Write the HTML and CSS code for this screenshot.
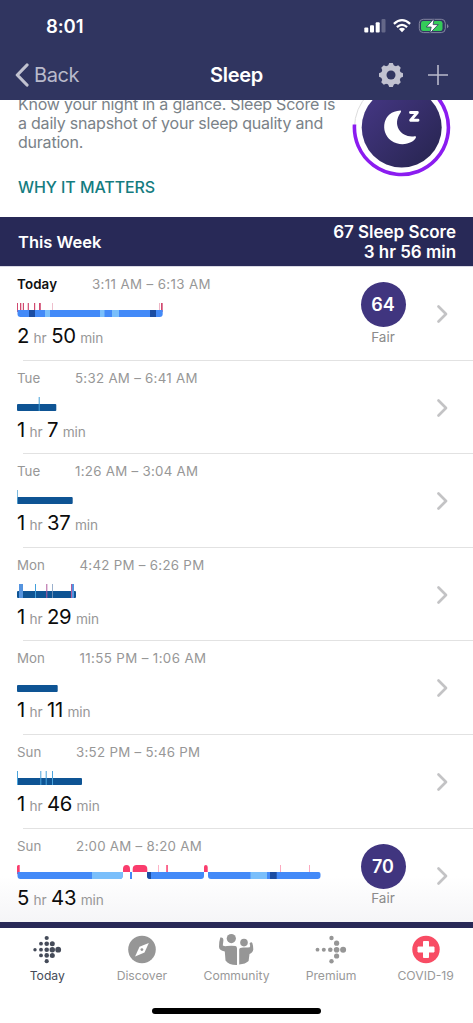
FILE: index.html
```html
<!DOCTYPE html>
<html lang="en">
<head>
<meta charset="utf-8">
<title>Sleep</title>
<link rel="stylesheet" href="styles.css">
</head>
<body>
<div class="app">
  <header class="header">
    <div class="status">
      <span class="clock">8:01</span>
      <svg class="status-icons" width="90" height="20" viewBox="360 16 90 20">
        <g fill="#fff">
          <rect x="364.300" y="27.500" width="4" height="5" rx="1"/>
          <rect x="370" y="25.300" width="4" height="7.200" rx="1"/>
          <rect x="375.700" y="22.300" width="4" height="10.200" rx="1"/>
          <rect x="381.500" y="19" width="4" height="13.500" rx="1" opacity=".25"/>
        </g>
        <g fill="none" stroke="#fff" stroke-width="2.300">
          <path d="M393.900 23.900Q402 16.300 410.100 23.900"/>
          <path d="M396.900 27.100Q402 22.700 407.100 27.100"/>
        </g>
        <path d="M398.900 29Q402 26.700 405.100 29L402 32.300Z" fill="#fff"/>
        <rect x="419.300" y="19.300" width="26" height="13.300" rx="4" fill="none" stroke="#8486a0"/>
        <path d="M447 24v4.300q1.400-.6 1.400-2.100T447 24Z" fill="#8486a0"/>
        <rect x="421" y="21" width="21.500" height="10" rx="2.300" fill="#34cb59"/>
        <path d="M434.300 18.300L426.300 27h4.900l-1.400 6.400 8.400-8.800h-5.100Z" fill="#fff" stroke="#303560" stroke-width=".8"/>
      </svg>
    </div>
    <div class="navbar">
      <div class="back">
        <svg width="14" height="24" viewBox="0 0 14 24"><path d="M12 2L2.300 12 12 22" fill="none" stroke="#c1c2d0" stroke-width="3.200" stroke-linecap="round" stroke-linejoin="round"/></svg>
        <span>Back</span>
      </div>
      <h1 class="title">Sleep</h1>
      <div class="actions">
        <svg width="26" height="26" viewBox="-13 -13 26 26">
          <g fill="#c1c2d0">
            <g id="teeth"><path id="tooth" d="M-3.400-8L-1.800-12H1.800L3.400-8V8L1.800 12H-1.800L-3.400 8Z"/><use href="#tooth" transform="rotate(90)"/></g>
            <use href="#teeth" transform="rotate(45)"/>
            <circle r="10"/>
          </g>
          <circle r="4.500" fill="#303560"/>
        </svg>
        <svg width="20" height="20" viewBox="0 0 20 20"><path d="M0 10H20M10 0V20" stroke="#b9bacb" stroke-width="1.600"/></svg>
      </div>
    </div>
  </header>

  <section class="intro">
    <div class="intro-copy">
      <p>Know your night in a glance. Sleep Score is<br>a daily snapshot of your sleep quality and<br>duration.</p>
      <a class="why">WHY IT MATTERS</a>
    </div>
    <svg class="score-ring" width="100" height="80" viewBox="352 100 100 80">
      <defs><linearGradient id="night" x1="0" y1="0" x2="1" y2="1"><stop offset=".15" stop-color="#42357f"/><stop offset=".9" stop-color="#292653"/></linearGradient></defs>
      <circle cx="401.500" cy="127.500" r="47" fill="none" stroke="#ddd" stroke-width="1"/>
      <path d="M354.500 124.500A47 47 0 1 0 434.700 94.300" fill="none" stroke="#8b1cf0" stroke-width="3.600"/>
      <circle cx="401.700" cy="127.500" r="40" fill="url(#night)"/>
      <path d="M400.300 110.600C382.500 111.500 379.600 132 391 140.500C401.500 148 414.500 142.500 416 137.300C416.200 136.300 415.300 136 413.500 136.400C401.500 137.500 391.500 125.500 400.500 112.800C401.300 111.500 401.300 110.500 400.300 110.600Z" fill="#fff"/>
      <path d="M410.500 112.500H417.300L410.700 120.300H418" fill="none" stroke="#fff" stroke-width="2.900" stroke-linejoin="round" stroke-linecap="round"/>
    </svg>
  </section>

  <section class="week">
    <h2>This Week</h2>
    <div class="week-total">67 Sleep Score<br>3 hr 56 min</div>
  </section>

  <main class="list">
    <article class="row">
      <div class="log">
        <div class="when"><b class="day today">Today</b><span class="range wider">3:11 AM – 6:13 AM</span></div>
        <svg class="chart" width="310" height="15" viewBox="17 -8 310 15">
          <g fill="#d14970"><path d="M17-7h1v9h-1z"/><path d="M20-7h1.300v7H20zM22.800-7h1.200v7h-1.200zM27.700-7h1.200v7h-1.200zM34-7h1.200v7H34zM39-7h1.800v7H39zM161-7h1.700v9H161z"/><path d="M52-7h.7v7H52zM159-7h.8v7h-.8z" opacity=".5"/></g>
          <path d="M17.500 0H162.700V4a3 3 0 0 1-3 3H20.500a3 3 0 0 1-3-3Z" fill="#438af8"/>
          <path d="M29 0h6v7h-6zM150 0h6v7h-6z" fill="#1b4da2"/><path d="M45 0h5v7h-5zM100 0h4.500v7H100zM112 0h7v7h-7z" fill="#7abffb"/>
        </svg>
        <div class="duration">2 <small>hr</small> 50 <small>min</small></div>
      </div>
      <div class="score"><span class="badge">64</span><span class="rating">Fair</span></div>
      <svg class="chevron" width="14" height="20" viewBox="0 0 14 20"><path d="M3.500 2.500L11 10 3.500 17.500" /></svg>
    </article>

    <article class="row">
      <div class="log">
        <div class="when"><span class="day tue">Tue</span><span class="range">5:32 AM – 6:41 AM</span></div>
        <svg class="chart" width="310" height="15" viewBox="17 -8 310 15"><rect x="17" width="39.300" height="7" rx="1" fill="#0e5494"/><path d="M38.700-7h1V7h-1z" fill="#439fd8"/></svg>
        <div class="duration">1 <small>hr</small> 7 <small>min</small></div>
      </div>
      <svg class="chevron" width="14" height="20" viewBox="0 0 14 20"><path d="M3.500 2.500L11 10 3.500 17.500" /></svg>
    </article>

    <article class="row">
      <div class="log">
        <div class="when"><span class="day tue">Tue</span><span class="range">1:26 AM – 3:04 AM</span></div>
        <svg class="chart" width="310" height="15" viewBox="17 -8 310 15"><rect x="17" width="55.700" height="7" rx="1" fill="#0e5494"/><path d="M17-7h.8V7H17z" fill="#5ba9d7"/></svg>
        <div class="duration">1 <small>hr</small> 37 <small>min</small></div>
      </div>
      <svg class="chevron" width="14" height="20" viewBox="0 0 14 20"><path d="M3.500 2.500L11 10 3.500 17.500" /></svg>
    </article>

    <article class="row">
      <div class="log">
        <div class="when"><span class="day mon">Mon</span><span class="range">4:42 PM – 6:26 PM</span></div>
        <svg class="chart" width="310" height="15" viewBox="17 -8 310 15"><rect x="17" width="59" height="7" rx="1" fill="#0e5494"/><path d="M19-7h4V7h-4zM72-7h2V7h-2z" fill="#5594df"/><path d="M35-7h1V7h-1z" fill="#42a0dc"/><path d="M46.300-7h1V7h-1zM71-7h1V7h-1z" fill="#b05a9e"/><path d="M52-7h.8V7H52z" fill="#829dc0"/></svg>
        <div class="duration">1 <small>hr</small> 29 <small>min</small></div>
      </div>
      <svg class="chevron" width="14" height="20" viewBox="0 0 14 20"><path d="M3.500 2.500L11 10 3.500 17.500" /></svg>
    </article>

    <article class="row">
      <div class="log">
        <div class="when"><span class="day mon">Mon</span><span class="range wider">11:55 PM – 1:06 AM</span></div>
        <svg class="chart" width="310" height="15" viewBox="17 -8 310 15"><rect x="17" width="40.700" height="7" rx="1" fill="#0e5494"/></svg>
        <div class="duration">1 <small>hr</small> 11 <small>min</small></div>
      </div>
      <svg class="chevron" width="14" height="20" viewBox="0 0 14 20"><path d="M3.500 2.500L11 10 3.500 17.500" /></svg>
    </article>

    <article class="row">
      <div class="log">
        <div class="when"><span class="day sun">Sun</span><span class="range">3:52 PM – 5:46 PM</span></div>
        <svg class="chart" width="310" height="15" viewBox="17 -8 310 15"><rect x="17" width="65" height="7" rx="1" fill="#0e5494"/><path d="M17-7h1V7h-1zM40.300-7h1V7h-1zM45.700-7h1V7h-1zM52-7h1V7h-1z" fill="#4ba4dc"/></svg>
        <div class="duration">1 <small>hr</small> 46 <small>min</small></div>
      </div>
      <svg class="chevron" width="14" height="20" viewBox="0 0 14 20"><path d="M3.500 2.500L11 10 3.500 17.500" /></svg>
    </article>

    <article class="row last">
      <div class="log">
        <div class="when"><span class="day sun">Sun</span><span class="range">2:00 AM – 8:20 AM</span></div>
        <svg class="chart" width="310" height="15" viewBox="17 -8 310 15">
          <g fill="#fa3c6d"><path d="M17-5.500Q17-7 18.500-7H19.700V3L17 2ZM123 0v-3q0-4 3.500-4t3.500 4v3ZM132.700 0v-3q0-4 4-4h6.600q4 0 4 4v3ZM204 0v-5q0-2 1.800-2t1.900 2v5ZM166.300-7h1.500v7h-1.500z"/><path d="M158.200-7h.7v7h-.7zM280-7h.8v7h-.8zM309-7h.8v7h-.8z" opacity=".55"/></g>
          <g fill="#438af8"><path d="M17.500 0H122.700V4a3 3 0 0 1-3 3H20.500a3 3 0 0 1-3-3ZM130 0h2v7h-2zM147 0H204V4a3 3 0 0 1-3 3H150a3 3 0 0 1-3-3ZM208 0H318.500a2 2 0 0 1 2 2V4a3 3 0 0 1-3 3H211a3 3 0 0 1-3-3Z"/></g>
          <path d="M92 0H122.700V4a3 3 0 0 1-3 3H92ZM250.500 0h16.500v7h-16.500z" fill="#7abffb"/><path d="M147 0h4v7h-1q-3 0-3-3ZM270 0h6.700v7H270z" fill="#1b4da2"/>
        </svg>
        <div class="duration">5 <small>hr</small> 43 <small>min</small></div>
      </div>
      <div class="score"><span class="badge">70</span><span class="rating">Fair</span></div>
      <svg class="chevron" width="14" height="20" viewBox="0 0 14 20"><path d="M3.500 2.500L11 10 3.500 17.500" /></svg>
    </article>
  </main>

  <footer class="tabbar">
    <nav class="tabs">
      <a class="tab active">
        <svg width="40" height="34" viewBox="27 933 40 34" fill="#454b59"><circle cx="35" cy="949.700" r="1.700"/><circle cx="41" cy="943.700" r="1.900"/><circle cx="41" cy="949.700" r="1.900"/><circle cx="41" cy="955.400" r="1.900"/><circle cx="46.700" cy="938" r="2.100"/><circle cx="46.700" cy="943.700" r="2.300"/><circle cx="46.700" cy="949.700" r="2.300"/><circle cx="46.700" cy="955.400" r="2.300"/><circle cx="46.700" cy="961.200" r="2.100"/><circle cx="52.300" cy="943.700" r="2.500"/><circle cx="52.300" cy="949.700" r="2.700"/><circle cx="52.300" cy="955.400" r="2.500"/><circle cx="58.200" cy="949.700" r="2.900"/></svg>
        <span>Today</span>
      </a>
      <a class="tab">
        <svg width="40" height="34" viewBox="121.700 933 40 34"><circle cx="141.700" cy="949.500" r="13.800" fill="#969696"/><path d="M148.500 943L144.200 952.500 134.800 956.500 139.200 946.800Z" fill="#fff"/><circle cx="141.600" cy="949.600" r="1.400" fill="#969696"/></svg>
        <span>Discover</span>
      </a>
      <a class="tab">
        <svg width="40" height="34" viewBox="216 933 40 34" fill="#969696"><circle cx="231.300" cy="938.600" r="4.600"/><path d="M220.300 937.500Q223.500 936.800 223.400 940.500L222.800 945.500Q224.600 946.600 227 946.100Q231.500 945.200 235.500 946.100Q237 946.500 237 948.500V965Q229 965.200 225.500 960.500L224.800 951.500Q219 950.500 219 946.800Q219 941.500 220.300 937.500Z"/><circle cx="244" cy="942.600" r="3.800"/><path d="M239.200 949.500Q239.500 947.600 243 947.600H247.600Q250.300 947.700 250.200 946L249.600 943.300Q251.500 941.500 252.400 943.200Q253.300 946 253.300 949.500Q252.800 952.800 249.500 954L248.600 961Q245.500 964 239.200 964.500Z"/></svg>
        <span>Community</span>
      </a>
      <a class="tab">
        <svg width="40" height="34" viewBox="310.500 933 40 34" fill="#969696"><circle cx="317" cy="949.700" r="1.900"/><circle cx="323.300" cy="949.700" r="2"/><circle cx="329.800" cy="949.700" r="2.300"/><circle cx="336.100" cy="949.700" r="2.800"/><circle cx="342.600" cy="949.700" r="3"/><circle cx="331" cy="938" r="2.200"/><circle cx="336.100" cy="943.200" r="2.600"/><circle cx="336.100" cy="956" r="2.600"/><circle cx="331" cy="961.200" r="2.200"/></svg>
        <span>Premium</span>
      </a>
      <a class="tab">
        <svg width="40" height="34" viewBox="405.300 933 40 34"><circle cx="425.300" cy="949.500" r="13.700" fill="#f84c64"/><path d="M422.800 941.500h5v5.500h5.500v5h-5.500v5.500h-5V952h-5.500v-5h5.500Z" fill="#fff" stroke="#fff" stroke-linejoin="round"/></svg>
        <span>COVID-19</span>
      </a>
    </nav>
    <div class="home-bar"></div>
  </footer>
</div>
</body>
</html>
```

FILE: styles.css
```css
* { box-sizing: border-box; }
body { margin: 0; background: #fff; font-family: Inter, "Liberation Sans", sans-serif; }
svg { display: block; flex: none; }
.app { width: 473px; height: 1023px; overflow: hidden; display: flex; flex-direction: column; }

.header { height: 100px; flex: none; z-index: 1; background: #303560; color: #fff; }
.status { height: 50px; display: flex; justify-content: space-between; padding: 16px 23px 0 46px; }
.clock { font-size: 18.500px; line-height: 20px; font-weight: 600; letter-spacing: -.1px; }
.navbar { height: 50px; display: grid; grid-template-columns: 1fr auto 1fr; align-items: center; padding: 0 25px 0 15px; }
.back { display: flex; align-items: center; gap: 5px; color: #b9bacb; font-size: 20px; letter-spacing: -.4px; }
.title { margin: 0 0 0 10px; font-size: 20px; font-weight: 600; letter-spacing: -.3px; }
.actions { display: flex; align-items: center; justify-content: flex-end; gap: 24px; }

.intro { height: 117px; flex: none; display: flex; justify-content: space-between; padding: 0 21px 0 18px; }
.intro-copy { margin-top: -5px; white-space: nowrap; }
.intro p { margin: 0; font-size: 16px; line-height: 19px; letter-spacing: -.22px; color: #7a8288; }
.why { display: block; margin-top: 25px; font-size: 16px; line-height: 20px; font-weight: 500; letter-spacing: -.08px; color: #147c80; }

.week { height: 50px; flex: none; display: flex; align-items: center; justify-content: space-between; padding: 0 17px 0 18px; background: #282957; color: #fff; border-bottom: 1px solid #d8d8e4; font-weight: 600; }
.week h2 { margin: 0; font-size: 16.500px; font-weight: 600; }
.week-total { padding-top: 1px; text-align: right; font-size: 17px; line-height: 20px; letter-spacing: -.03px; }

.list { height: 655px; flex: none; background: linear-gradient(#fff 93%, #f5f5f7); }
.row { height: 93.600px; display: flex; padding: 0 24px 0 17px; background: linear-gradient(#e2e2e2, #e2e2e2) right bottom / 450px 1px no-repeat; }
.row.last { background: none; }
.log { flex: 1; padding-top: 8px; white-space: nowrap; }
.when { display: flex; height: 18px; font-size: 13.300px; line-height: 18px; color: #979797; }
.range { letter-spacing: .28px; }
.range.wider { letter-spacing: .38px; }
.today { color: #111; width: 75px; font-weight: 600; letter-spacing: .15px; }
.tue { width: 58px; }
.mon { width: 62.500px; }
.sun { width: 59px; }
.chart { margin-top: 9.200px; }
.duration { margin-top: 6.800px; font-size: 20.300px; line-height: 24px; letter-spacing: -.3px; word-spacing: -.9px; color: #0c0c0c; }
.duration small { font-size: 13.700px; letter-spacing: -.1px; color: #979797; }
.score { width: 46px; margin: 15px 29px 0 0; display: flex; flex-direction: column; align-items: center; }
.badge { width: 45px; height: 45px; border-radius: 50%; background: #40357f; color: #fff; font-size: 18px; line-height: 45px; font-weight: 600; text-align: center; }
.rating { margin-top: 1.500px; font-size: 13.500px; line-height: 17px; color: #8b8b8b; }
.chevron { margin-top: 37px; }
.chevron path { fill: none; stroke: #c3c3c5; stroke-width: 2.700; stroke-linecap: round; stroke-linejoin: round; }

.tabbar { flex: 1; border-top: 6px solid #282957; background: #fff; display: flex; flex-direction: column; align-items: center; }
.tabs { width: 473px; height: 80px; display: grid; grid-template-columns: repeat(5, 1fr); padding-top: 5px; }
.tab { display: flex; flex-direction: column; align-items: center; font-size: 12.200px; line-height: 16px; color: #999; gap: 1px; }
.tab.active { color: #454b59; }
.home-bar { width: 169px; height: 6px; border-radius: 3px; background: #000; }
```
